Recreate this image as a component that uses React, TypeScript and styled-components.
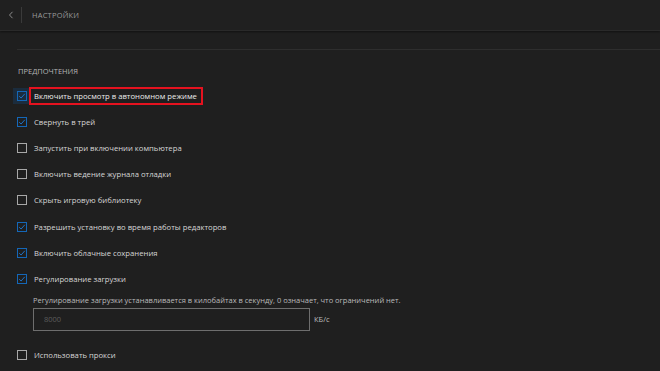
import styled, { createGlobalStyle } from 'styled-components'

const Global = createGlobalStyle`
  html, body { margin: 0; padding: 0; background: #1f1f1f; }
  body { font-family: 'Open Sans', 'Noto Sans', sans-serif; }
  * { box-sizing: border-box; }
`

const Page = styled.div`
  width: 660px;
  height: 371px;
  background: #1f1f1f;
  color: #cfcfcf;
  overflow: hidden;
  display: flex;
  flex-direction: column;
`

const Header = styled.header`
  height: 31px;
  flex-shrink: 0;
  display: flex;
  align-items: center;
  background: #202020;
  border-bottom: 1px solid #2a2a2a;
  box-shadow: 0 1px 2px rgba(0,0,0,0.45);
`

const BackBtn = styled.div`
  width: 22px;
  height: 16px;
  display: flex;
  align-items: center;
  justify-content: center;
  color: #8a8a8a;
  border-right: 1px solid #3a3a3a;
`

const Title = styled.h1`
  margin: 0 0 0 10px;
  font-size: 7.5px;
  font-weight: 400;
  letter-spacing: 0.2px;
  color: #9a9a9a;
  text-transform: uppercase;
`

const Body = styled.main`
  flex: 1;
  padding: 18px 0 0 17px;
  display: flex;
  flex-direction: column;
`

const Divider = styled.div`
  height: 1px;
  background: #2e2e2e;
`

const Section = styled.h2`
  margin: 16px 0 0 1px;
  font-size: 7.5px;
  font-weight: 400;
  color: #b5b5b5;
  text-transform: uppercase;
  line-height: 10px;
`

const List = styled.div`
  margin-top: 7px;
  display: flex;
  flex-direction: column;
`

const Row = styled.label`
  height: 26.1px;
  display: flex;
  align-items: center;
  gap: 7px;
  font-size: 7.7px;
  color: #d6d6d6;
`

const BoxWrap = styled.span<{ $focus?: boolean }>`
  width: 17px;
  height: 16px;
  margin-left: -4px;
  margin-right: -4px;
  display: flex;
  align-items: center;
  justify-content: center;
  background: ${({ $focus }) => ($focus ? '#1b2c3d' : 'transparent')};
`

const Box = styled.span<{ $checked: boolean }>`
  width: 10px;
  height: 10px;
  display: flex;
  align-items: center;
  justify-content: center;
  border: 1px solid ${({ $checked }) => ($checked ? '#1467b8' : '#a8a8a8')};
  color: #1f7ad6;
`

const Label = styled.span<{ $focus?: boolean }>`
  padding: 1px 4px 1px 3px;
  margin-left: -4px;
  line-height: 12px;
  border: 2px solid ${({ $focus }) => ($focus ? '#e5121f' : 'transparent')};
  color: ${({ $focus }) => ($focus ? '#ebebeb' : '#d6d6d6')};
`

const Throttle = styled.div`
  margin-top: 2px;
  padding-left: 16px;
  display: flex;
  flex-direction: column;
`

const Hint = styled.p`
  margin: 0;
  font-size: 7.5px;
  line-height: 12px;
  color: #bababa;
`

const InputRow = styled.div`
  margin-top: 2px;
  display: flex;
  align-items: center;
  gap: 4px;
`

const Input = styled.input`
  width: 277px;
  height: 23px;
  background: transparent;
  border: 1px solid #6e6e6e;
  padding: 0 10px;
  font-family: inherit;
  font-size: 7.5px;
  color: #cfcfcf;
  outline: none;
  &::placeholder { color: #5c5c5c; }
`

const Unit = styled.span`
  font-size: 7.5px;
  color: #bdbdbd;
`

const Last = styled.div`
  margin-top: 11px;
`

const Check = () => (
  <svg width="8" height="8" viewBox="0 0 8 8" fill="none">
    <path d="M1.2 4.2 L3.1 6 L6.8 1.8" stroke="currentColor" strokeWidth="0.9" />
  </svg>
)

const options: { label: string; checked: boolean; focus?: boolean }[] = [
  { label: 'Включить просмотр в автономном режиме', checked: true, focus: true },
  { label: 'Свернуть в трей', checked: true },
  { label: 'Запустить при включении компьютера', checked: false },
  { label: 'Включить ведение журнала отладки', checked: false },
  { label: 'Скрыть игровую библиотеку', checked: false },
  { label: 'Разрешить установку во время работы редакторов', checked: true },
  { label: 'Включить облачные сохранения', checked: true },
  { label: 'Регулирование загрузки', checked: true },
]

function Option({ label, checked, focus }: { label: string; checked: boolean; focus?: boolean }) {
  return (
    <Row>
      <BoxWrap $focus={focus}>
        <Box $checked={checked}>{checked && <Check />}</Box>
      </BoxWrap>
      <Label $focus={focus}>{label}</Label>
    </Row>
  )
}

export default function App() {
  return (
    <>
      <Global />
      <Page>
        <Header>
          <BackBtn>
            <svg width="6" height="8" viewBox="0 0 6 8" fill="none">
              <path d="M4.5 0.8 L1.5 4 L4.5 7.2" stroke="currentColor" strokeWidth="1" />
            </svg>
          </BackBtn>
          <Title>Настройки</Title>
        </Header>
        <Body>
          <Divider />
          <Section>Предпочтения</Section>
          <List>
            {options.map((o) => (
              <Option key={o.label} {...o} />
            ))}
          </List>
          <Throttle>
            <Hint>Регулирование загрузки устанавливается в килобайтах в секунду, 0 означает, что ограничений нет.</Hint>
            <InputRow>
              <Input placeholder="8000" />
              <Unit>КБ/с</Unit>
            </InputRow>
          </Throttle>
          <Last>
            <Option label="Использовать прокси" checked={false} />
          </Last>
        </Body>
      </Page>
    </>
  )
}
